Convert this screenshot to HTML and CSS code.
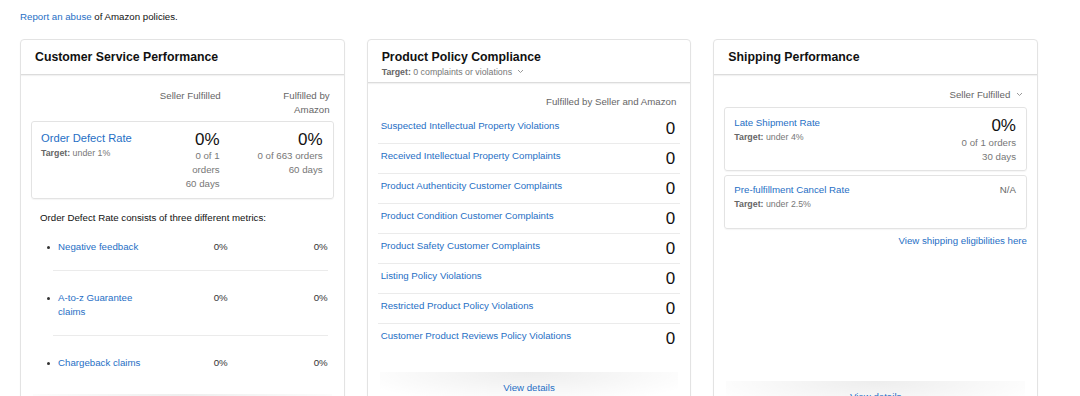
FILE: index.html
```html
<!DOCTYPE html>
<html lang="en">
<head>
  <meta charset="UTF-8">
  <meta name="viewport" content="width=device-width, initial-scale=1.0">
  <title>Account Health</title>
  <link rel="stylesheet" href="styles.css">
</head>
<body>
  <p class="notice"><a href="#">Report an abuse</a> of Amazon policies.</p>

  <div class="cards">
    <!-- Customer service -->
    <section class="card">
      <header class="card-head">
        <h2>Customer Service Performance</h2>
      </header>
      <div class="card-body">
        <div class="col-heads">
          <span></span>
          <span>Seller Fulfilled</span>
          <span>Fulfilled by<br>Amazon</span>
        </div>
        <div class="metric-box odr">
          <div>
            <a href="#" class="metric-name">Order Defect Rate</a>
            <div class="target"><b>Target:</b> under 1%</div>
          </div>
          <div class="val">
            <div class="pct">0%</div>
            <div class="sub">0 of 1<br>orders<br>60 days</div>
          </div>
          <div class="val">
            <div class="pct">0%</div>
            <div class="sub">0 of 663 orders<br>60 days</div>
          </div>
        </div>
        <p class="desc">Order Defect Rate consists of three different metrics:</p>
        <ul class="sub-metrics">
          <li><a href="#">Negative feedback</a><span>0%</span><span>0%</span></li>
          <li><a href="#">A-to-z Guarantee<br>claims</a><span>0%</span><span>0%</span></li>
          <li><a href="#">Chargeback claims</a><span>0%</span><span>0%</span></li>
        </ul>
      </div>
      <div class="card-foot"><a href="#">View details</a></div>
    </section>

    <!-- Product policy -->
    <section class="card">
      <header class="card-head">
        <h2>Product Policy Compliance</h2>
        <div class="head-target"><b>Target:</b> 0 complaints or violations
          <svg class="chev" width="7" height="5" viewBox="0 0 7 5"><path d="M1 1l2.5 2.5L6 1" fill="none" stroke="#999" stroke-width="1"/></svg>
        </div>
      </header>
      <div class="card-body policy">
        <div class="right-head">Fulfilled by Seller and Amazon</div>
        <ul class="policy-list">
          <li><a href="#">Suspected Intellectual Property Violations</a><span>0</span></li>
          <li><a href="#">Received Intellectual Property Complaints</a><span>0</span></li>
          <li><a href="#">Product Authenticity Customer Complaints</a><span>0</span></li>
          <li><a href="#">Product Condition Customer Complaints</a><span>0</span></li>
          <li><a href="#">Product Safety Customer Complaints</a><span>0</span></li>
          <li><a href="#">Listing Policy Violations</a><span>0</span></li>
          <li><a href="#">Restricted Product Policy Violations</a><span>0</span></li>
          <li><a href="#">Customer Product Reviews Policy Violations</a><span>0</span></li>
        </ul>
      </div>
      <div class="card-foot"><a href="#">View details</a></div>
    </section>

    <!-- Shipping -->
    <section class="card">
      <header class="card-head">
        <h2>Shipping Performance</h2>
      </header>
      <div class="card-body shipping">
        <div class="right-head">Seller Fulfilled
          <svg class="chev" width="7" height="5" viewBox="0 0 7 5"><path d="M1 1l2.5 2.5L6 1" fill="none" stroke="#999" stroke-width="1"/></svg>
        </div>
        <div class="metric-box ship">
          <div>
            <a href="#" class="metric-name">Late Shipment Rate</a>
            <div class="target"><b>Target:</b> under 4%</div>
          </div>
          <div class="val">
            <div class="pct">0%</div>
            <div class="sub">0 of 1 orders<br>30 days</div>
          </div>
        </div>
        <div class="metric-box ship cancel">
          <div>
            <a href="#" class="metric-name">Pre-fulfillment Cancel Rate</a>
            <div class="target"><b>Target:</b> under 2.5%</div>
          </div>
          <div class="val na">N/A</div>
        </div>
        <div class="right-link"><a href="#">View shipping eligibilities here</a></div>
      </div>
      <div class="card-foot"><a href="#">View details</a></div>
    </section>
  </div>
</body>
</html>
```

FILE: styles.css
```css
body {
  margin: 0;
  padding: 0 42px 0 20px;
  font-family: "Liberation Sans", Arial, sans-serif;
  font-size: 9.7px;
  line-height: 14px;
  color: #111;
  background: #fff;
}
a {
  color: #1f6fc5;
  text-decoration: none;
}
b {
  font-weight: bold;
}
.notice {
  margin: 10px 0 15px;
}
.cards {
  display: grid;
  grid-template-columns: repeat(3, 1fr);
  gap: 22px;
  align-items: start;
}
.card {
  border: 1px solid #e3e3e3;
  border-radius: 4px;
  box-shadow: 0 1px 2px rgba(0,0,0,0.04);
  overflow: hidden;
}
.card-head {
  padding: 9px 15px 9px 14px;
  border-bottom: 1px solid #dcdcdc;
  box-shadow: 0 1px 1px rgba(0,0,0,0.05);
}
.card-head h2 {
  margin: 0;
  font-size: 12.3px;
  line-height: 16px;
  font-weight: bold;
}
.head-target {
  font-size: 8.8px;
  line-height: 14px;
  color: #777;
  margin-bottom: -6px;
}
.head-target b, .target b {
  color: #666;
}
.chev {
  margin-left: 3px;
  vertical-align: 1px;
}
.card-body {
  padding: 14px 10px 8px;
}

/* customer service */
.col-heads {
  display: grid;
  grid-template-columns: 1fr 90px 109px;
  text-align: right;
  color: #666;
  margin-bottom: 4px;
  padding-right: 4px;
}
.metric-box {
  border: 1px solid #e3e3e3;
  border-radius: 3px;
  box-shadow: 0 1px 1px rgba(0,0,0,0.04);
  display: grid;
  padding: 9px 10px 7px 9px;
}
.metric-box.odr {
  grid-template-columns: 1fr 60px 103px;
}
.odr .metric-name {
  font-size: 11.2px;
  line-height: 15px;
}
.target {
  font-size: 8.8px;
  color: #777;
}
.val {
  text-align: right;
}
.pct {
  font-size: 17px;
  line-height: 18px;
}
.sub {
  color: #777;
}
.desc {
  margin: 12px 0 0 9px;
}
.sub-metrics {
  margin: 0 6px 0 22px;
  padding: 0;
}
.sub-metrics li {
  display: grid;
  grid-template-columns: 1fr 56px 100px;
  padding: 20px 0 16px 5px;
  border-top: 1px solid #ebebeb;
  text-align: right;
  color: #333;
}
.sub-metrics li::before {
  content: "";
  position: absolute;
  width: 3px;
  height: 3px;
  margin: 6px 0 0 -11px;
  background: #333;
  border-radius: 50%;
}
.sub-metrics li:first-child {
  border-top: none;
  padding-top: 15px;
}
.sub-metrics li a {
  text-align: left;
}

/* policy */
.card-body.policy {
  padding: 12px 10px 19px;
}
.right-head {
  text-align: right;
  color: #666;
  padding-right: 4px;
}
.policy-list {
  list-style: none;
  margin: 5px 0 0;
  padding: 0;
}
.policy-list li {
  display: flex;
  justify-content: space-between;
  align-items: flex-start;
  padding: 5px 5px 4px 3px;
  border-top: 1px solid #ebebeb;
}
.policy-list li:first-child {
  border-top: none;
}
.policy-list li span {
  font-size: 17px;
  line-height: 20px;
}

/* shipping */
.card-body.shipping {
  padding: 13px 10px 0;
  min-height: 306px;
  box-sizing: border-box;
}
.card-body.shipping .right-head {
  padding-right: 4px;
  margin-bottom: 5px;
}
.metric-box.ship {
  grid-template-columns: 1fr auto;
  padding: 8px 10px 6px 9px;
}
.ship .pct {
  line-height: 20px;
}
.metric-box.cancel {
  margin-top: 4px;
  padding: 7px 10px 17px 9px;
}
.val.na {
  color: #666;
}
.right-link {
  text-align: right;
  margin-top: 5px;
}

.card-foot {
  margin: 0 12px;
  padding: 9px 0 10px;
  text-align: center;
  background: radial-gradient(ellipse 60% 100% at 50% 0, rgba(0,0,0,0.07), rgba(0,0,0,0));
}
```
